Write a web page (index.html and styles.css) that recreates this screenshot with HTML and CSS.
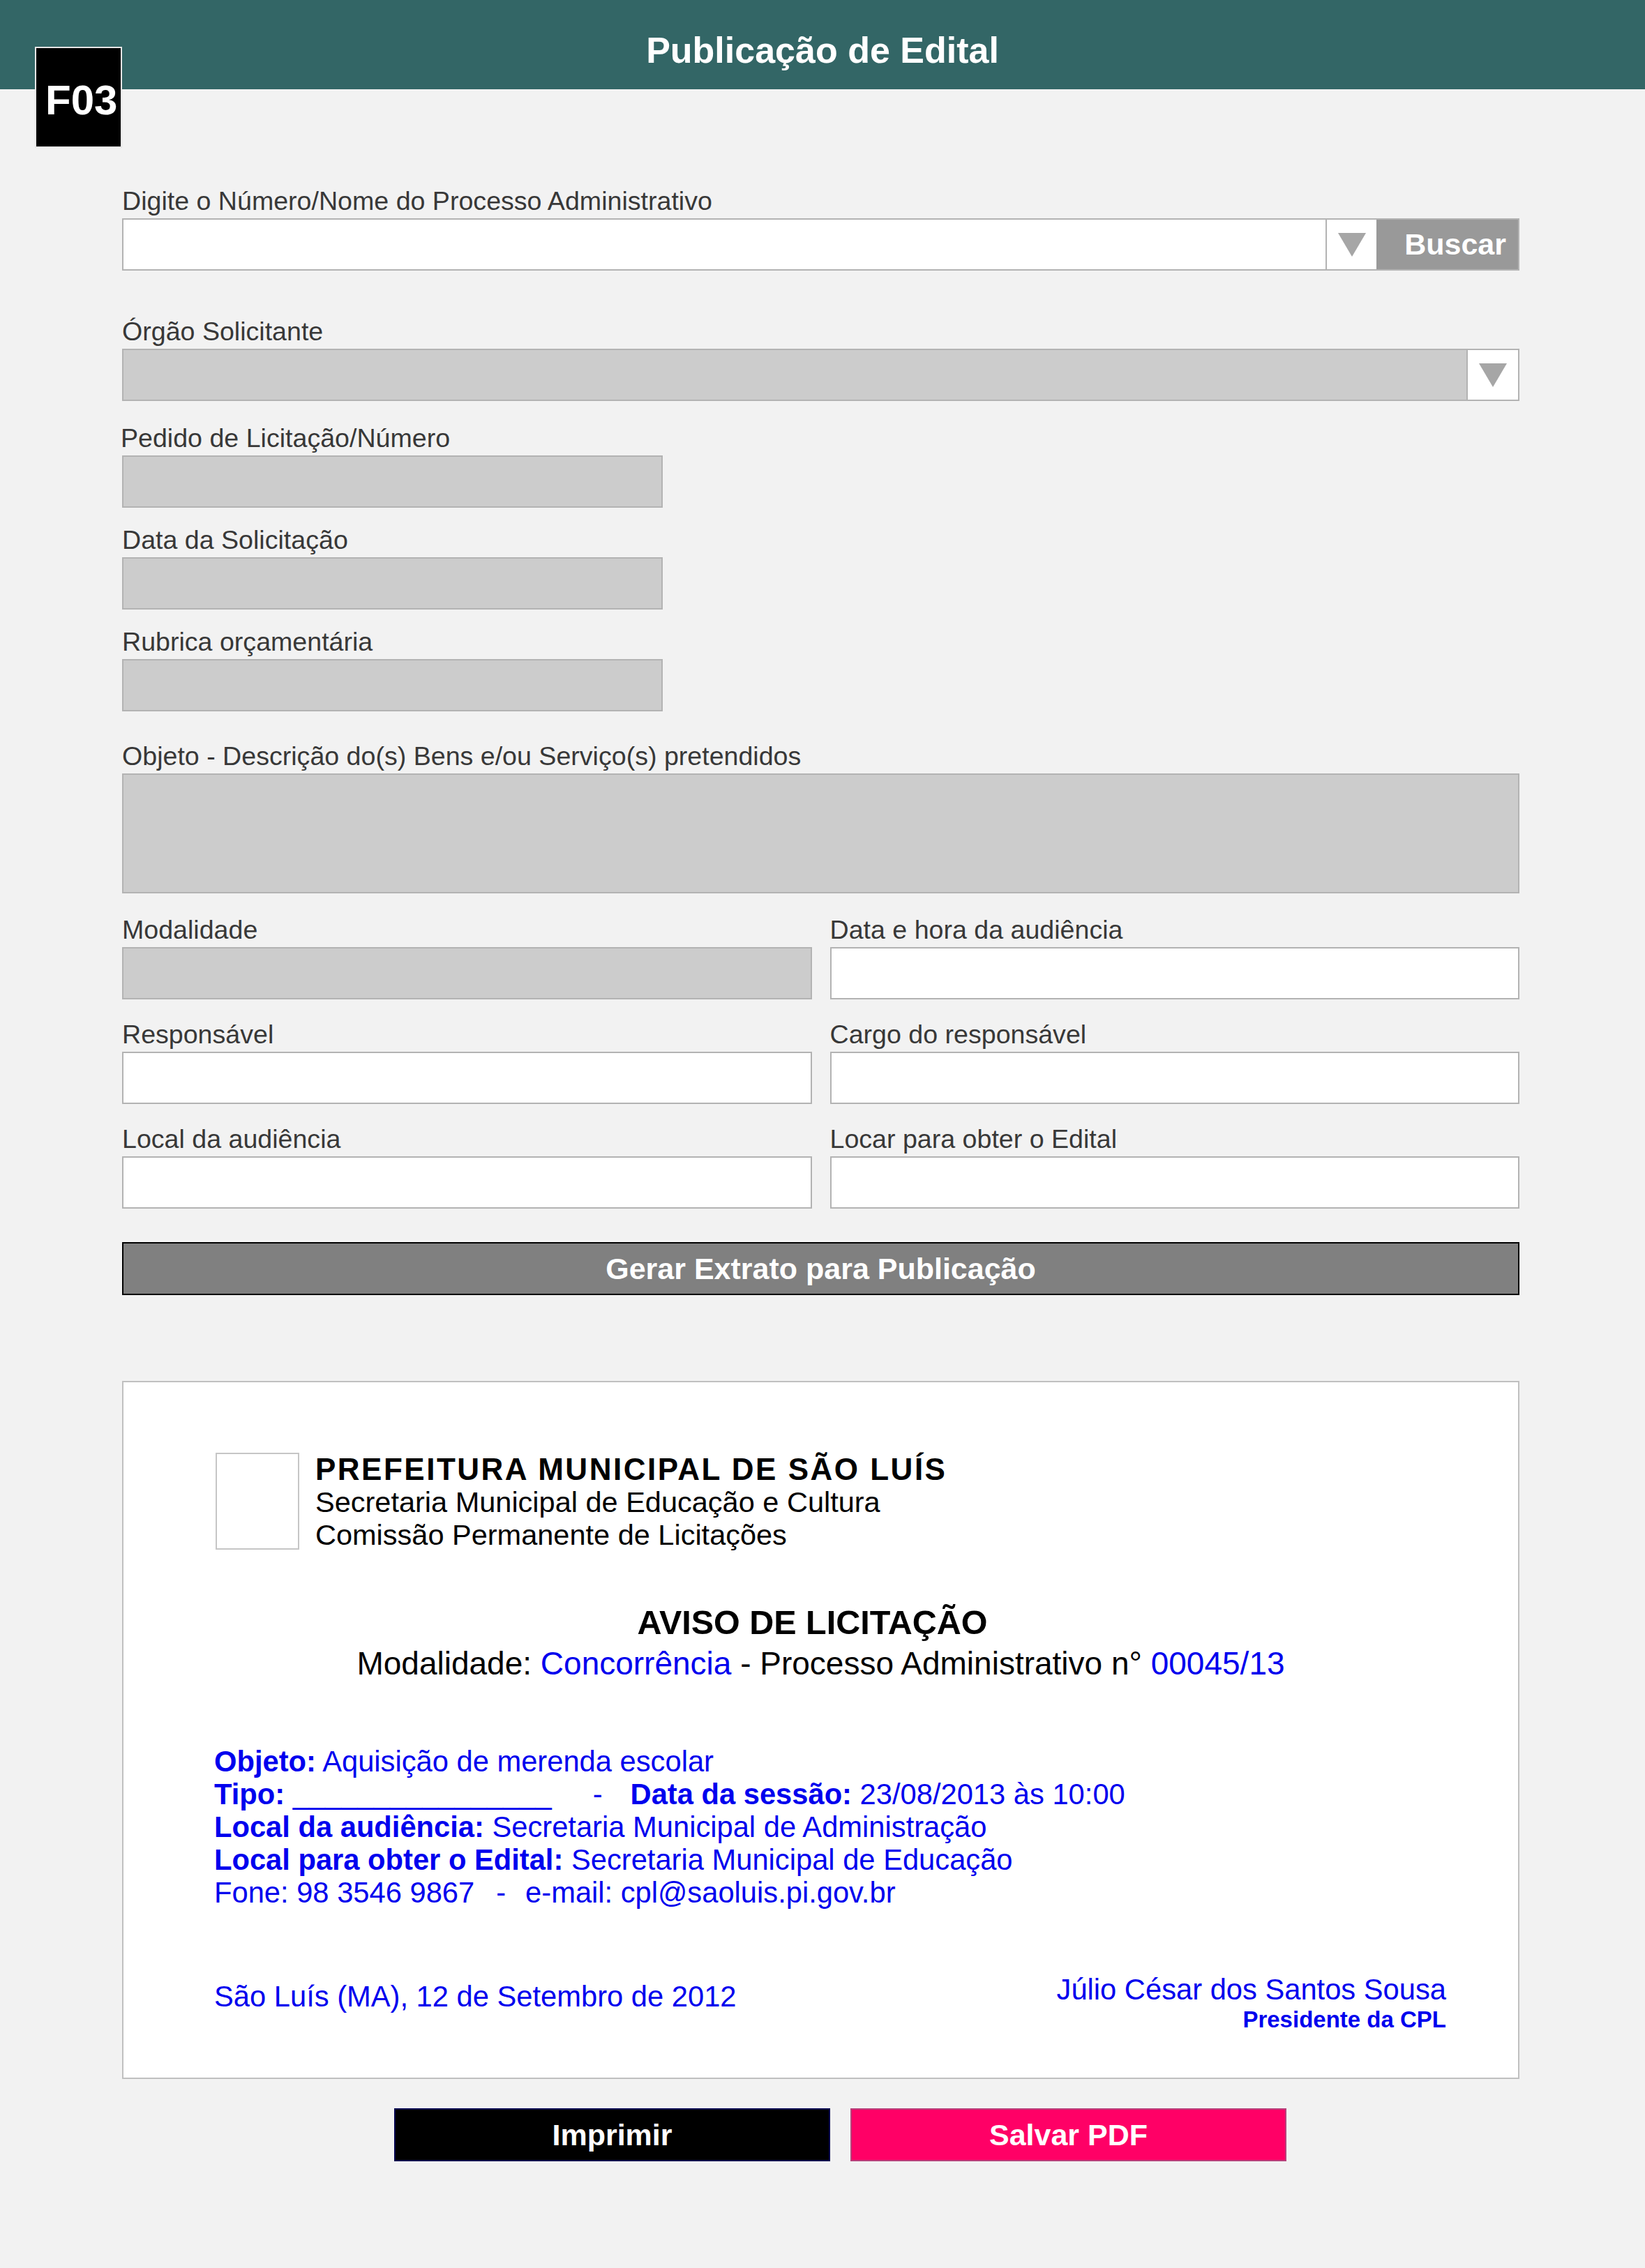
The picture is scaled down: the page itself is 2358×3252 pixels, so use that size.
FILE: index.html
```html
<!DOCTYPE html>
<html lang="pt-BR">
<head>
<meta charset="utf-8">
<title>Publicação de Edital</title>
<link rel="stylesheet" href="styles.css">
</head>
<body>
<header class="topbar">
  <h1 class="topbar-title">Publicação de Edital</h1>
  <div class="badge">F03</div>
</header>

<main class="form">
  <div class="field">
    <div class="label">Digite o Número/Nome do Processo Administrativo</div>
    <div class="combo">
      <div class="combo-input"></div>
      <div class="combo-drop">
        <svg width="40" height="34" viewBox="0 0 40 34"><polygon points="0,0 40,0 20,34" fill="#a6a6a6"/></svg>
      </div>
      <div class="combo-btn">Buscar</div>
    </div>
  </div>

  <div class="field f-orgao">
    <div class="label">Órgão Solicitante</div>
    <div class="combo combo-dis">
      <div class="combo-input"></div>
      <div class="combo-drop combo-drop-end">
        <svg width="40" height="34" viewBox="0 0 40 34"><polygon points="0,0 40,0 20,34" fill="#a6a6a6"/></svg>
      </div>
    </div>
  </div>

  <div class="field f-pedido">
    <div class="label label-shift">Pedido de Licitação/Número</div>
    <div class="box dis narrow"></div>
  </div>

  <div class="field f-std">
    <div class="label">Data da Solicitação</div>
    <div class="box dis narrow"></div>
  </div>

  <div class="field f-std">
    <div class="label">Rubrica orçamentária</div>
    <div class="box dis narrow"></div>
  </div>

  <div class="field f-objeto">
    <div class="label">Objeto - Descrição do(s) Bens e/ou Serviço(s) pretendidos</div>
    <div class="box dis area"></div>
  </div>

  <div class="grid2">
    <div class="field">
      <div class="label">Modalidade</div>
      <div class="box dis"></div>
    </div>
    <div class="field">
      <div class="label">Data e hora da audiência</div>
      <div class="box"></div>
    </div>
    <div class="field">
      <div class="label">Responsável</div>
      <div class="box"></div>
    </div>
    <div class="field">
      <div class="label">Cargo do responsável</div>
      <div class="box"></div>
    </div>
    <div class="field">
      <div class="label">Local da audiência</div>
      <div class="box"></div>
    </div>
    <div class="field">
      <div class="label">Locar para obter o Edital</div>
      <div class="box"></div>
    </div>
  </div>

  <div class="gen">Gerar Extrato para Publicação</div>

  <section class="preview">
    <div class="doc-head">
      <div class="logo"></div>
      <div class="org">
        <div class="org-title">PREFEITURA MUNICIPAL DE SÃO LUÍS</div>
        <div>Secretaria Municipal de Educação e Cultura</div>
        <div>Comissão Permanente de Licitações</div>
      </div>
    </div>

    <div class="notice-title">AVISO DE LICITAÇÃO</div>
    <div class="notice-sub">Modalidade: <span class="blue">Concorrência</span> - Processo Administrativo n° <span class="blue">00045/13</span></div>

    <div class="details">
      <div><b>Objeto:</b> Aquisição de merenda escolar</div>
      <div><b>Tipo:</b> <span class="blank">________________</span><span class="sep-tipo">-</span><b>Data da sessão:</b> 23/08/2013 às 10:00</div>
      <div><b>Local da audiência:</b> Secretaria Municipal de Administração</div>
      <div><b>Local para obter o Edital:</b> Secretaria Municipal de Educação</div>
      <div>Fone: 98 3546 9867<span class="sep-fone">-</span>e-mail: cpl@saoluis.pi.gov.br</div>
    </div>

    <div class="sign">
      <div class="sign-date">São Luís (MA), 12 de Setembro de 2012</div>
      <div class="sign-name">
        <div class="sign-person">Júlio César dos Santos Sousa</div>
        <div class="sign-role">Presidente da CPL</div>
      </div>
    </div>
  </section>

  <div class="actions">
    <div class="btn btn-print">Imprimir</div>
    <div class="btn btn-pdf">Salvar PDF</div>
  </div>
</main>
</body>
</html>
```

FILE: styles.css
```css
* { box-sizing: border-box; }

html, body {
  margin: 0;
  padding: 0;
  background: #f2f2f2;
}

body {
  width: 2358px;
  min-height: 3252px;
  font-family: "Liberation Sans", Arial, Helvetica, sans-serif;
  color: #000;
}

/* ---------- top bar ---------- */
.topbar {
  position: relative;
  height: 128px;
  background: #336666;
  padding-top: 16px;
}

.topbar-title {
  margin: 0;
  text-align: center;
  color: #fff;
  font-size: 52px;
  font-weight: bold;
  line-height: 112px;
}

.badge {
  position: absolute;
  left: 50px;
  top: 67px;
  width: 125px;
  height: 145px;
  background: #000;
  border: 2px solid #e6e6e6;
  color: #fff;
  font-size: 60px;
  font-weight: bold;
  line-height: 60px;
  padding: 45px 0 0 13px;
}

/* ---------- form ---------- */
.form {
  padding: 139px 180px 0 175px;
}

.label {
  font-size: 37.6px;
  line-height: 42px;
  color: #383838;
  margin-bottom: 4px;
  white-space: nowrap;
}

.label-shift { margin-left: -2px; }

.box {
  height: 75px;
  border: 2px solid #b3b3b3;
  background: #fff;
}

.box.dis { background: #cccccc; }
.box.narrow { width: 775px; }
.box.area { height: 172px; }

.combo {
  display: flex;
  height: 75px;
  border: 2px solid #b3b3b3;
  background: #fff;
}

.combo-dis { background: #cccccc; }

.combo-input { flex: 1; }

.combo-drop {
  width: 73px;
  border-left: 2px solid #b3b3b3;
  background: #fff;
  display: flex;
  align-items: center;
  justify-content: center;
}

.combo-drop-end { width: 74px; }

.combo-btn {
  width: 203px;
  background: #999999;
  color: #fff;
  font-size: 43px;
  font-weight: bold;
  display: flex;
  align-items: center;
  justify-content: flex-end;
  padding-right: 17px;
}

.f-orgao { margin-top: 66px; }
.f-pedido { margin-top: 32px; }
.f-std { margin-top: 25px; }
.f-objeto { margin-top: 43px; }

.grid2 {
  display: grid;
  grid-template-columns: 1fr 1fr;
  column-gap: 26px;
  row-gap: 29px;
  margin-top: 31px;
}

.gen {
  margin-top: 48px;
  height: 76px;
  background: #808080;
  border: 2px solid #000;
  color: #fff;
  font-size: 43px;
  font-weight: bold;
  display: flex;
  align-items: center;
  justify-content: center;
}

/* ---------- preview ---------- */
.preview {
  margin-top: 123px;
  background: #fff;
  border: 2px solid #c0c0c0;
  padding: 101px 0 63px 0;
}

.doc-head {
  display: flex;
  align-items: flex-start;
  margin-left: 132px;
}

.logo {
  width: 120px;
  height: 139px;
  border: 2px solid #c6c6c6;
  background: #fff;
  margin-right: 23px;
}

.org {
  font-size: 41.5px;
  line-height: 47px;
  color: #000;
}

.org-title {
  font-size: 44px;
  font-weight: bold;
  letter-spacing: 2.5px;
}

.notice-title {
  margin-top: 75px;
  padding-right: 24px;
  text-align: center;
  font-size: 48.5px;
  font-weight: bold;
  line-height: 54px;
}

.notice-sub {
  margin-top: 7px;
  text-align: center;
  font-size: 46px;
  line-height: 50px;
}

.blue { color: #0000ee; }

.details {
  margin: 92px 0 0 130px;
  font-size: 41.7px;
  line-height: 47px;
  color: #0000ee;
}

.sep-tipo { margin: 0 40px 0 59px; }
.sep-fone { margin: 0 28px 0 31px; }

.sign {
  display: flex;
  justify-content: space-between;
  align-items: flex-start;
  margin-top: 92px;
  padding: 0 103px 0 130px;
  color: #0000ee;
}

.sign-date {
  margin-top: 10px;
  font-size: 41.7px;
  line-height: 47px;
}

.sign-name { text-align: right; }

.sign-person {
  font-size: 41.7px;
  line-height: 47px;
}

.sign-role {
  font-size: 33px;
  line-height: 40px;
  font-weight: bold;
}

/* ---------- actions ---------- */
.actions {
  display: flex;
  gap: 29px;
  margin: 42px 0 0 390px;
}

.btn {
  width: 625px;
  height: 76px;
  display: flex;
  align-items: center;
  justify-content: center;
  color: #fff;
  font-size: 43px;
  font-weight: bold;
}

.btn-print {
  background: #000;
  border: 2px solid #00004d;
}

.btn-pdf {
  background: #ff0066;
  border: 2px solid #b8407a;
}
```
